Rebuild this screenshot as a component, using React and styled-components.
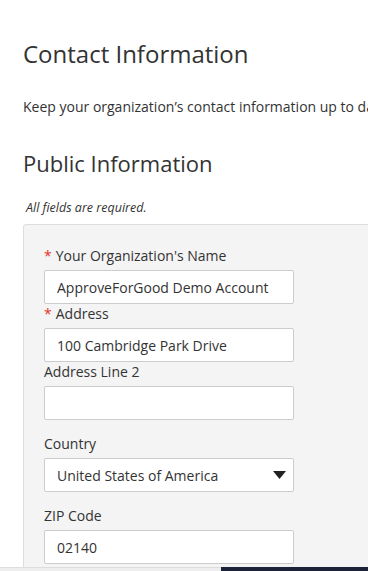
import React from "react";
import styled, { createGlobalStyle } from "styled-components";

const GlobalStyle = createGlobalStyle`
  html, body {
    margin: 0;
    padding: 0;
    background: #fff;
    overflow: hidden;
  }
  body {
    font-family: "Open Sans", "Liberation Sans", sans-serif;
    color: #333;
  }
`;

const fields = [
  { label: "Your Organization's Name", value: "ApproveForGood Demo Account", required: true },
  { label: "Address", value: "100 Cambridge Park Drive", required: true },
  { label: "Address Line 2", value: "", spaced: true },
];

export default function App() {
  return (
    <>
      <GlobalStyle />
      <Page>
        <Title>Contact Information</Title>
        <Intro>
          Keep your organization’s contact information up to date so that
          applicants can reach you.
        </Intro>
        <Subtitle>Public Information</Subtitle>
        <Note>All fields are required.</Note>
        <Panel>
          {fields.map((f) => (
            <Field key={f.label} $spaced={f.spaced}>
              <Label>
                {f.required && <Star>*</Star>}
                {f.label}
              </Label>
              <Input type="text" defaultValue={f.value} />
            </Field>
          ))}
          <Field $spaced>
            <Label>Country</Label>
            <SelectBox>
              <span>United States of America</span>
              <svg width="13" height="8" viewBox="0 0 13 8">
                <path d="M0 0 H13 L6.5 8 Z" fill="#222" />
              </svg>
            </SelectBox>
          </Field>
          <Field $spaced>
            <Label>ZIP Code</Label>
            <Input type="text" defaultValue="02140" />
          </Field>
        </Panel>
      </Page>
      <BottomBar>
        <BarLight />
        <BarDark />
      </BottomBar>
    </>
  );
}

const Page = styled.div`
  width: 640px;
  padding: 37px 0 0 23px;
`;

const Title = styled.h1`
  margin: 0;
  font-size: 24px;
  font-weight: 400;
  line-height: 34px;
  color: #333;
`;

const Intro = styled.p`
  margin: 26px 0 0;
  font-size: 14px;
  line-height: 20px;
  white-space: nowrap;
  color: #333;
`;

const Subtitle = styled.h2`
  margin: 29px 0 0;
  font-size: 22px;
  font-weight: 400;
  line-height: 34px;
  color: #333;
`;

const Note = styled.p`
  margin: 20px 0 0 3px;
  font-size: 12.5px;
  font-style: italic;
  line-height: 16px;
  color: #333;
`;

const Panel = styled.div`
  margin-top: 8px;
  background: #f4f4f4;
  border: 1px solid #ddd;
  border-radius: 3px;
  padding: 21px 20px 20px;
  min-height: 400px;
`;

const Field = styled.div`
  display: flex;
  flex-direction: column;
  width: 250px;
  margin-bottom: ${(p) => (p.$spaced ? "14px" : "0")};
`;

const Label = styled.label`
  font-size: 14px;
  line-height: 20px;
  color: #333;
  margin-bottom: 4px;
`;

const Star = styled.span`
  color: #e5322d;
  margin-right: 4px;
`;

const Input = styled.input`
  box-sizing: border-box;
  width: 250px;
  height: 34px;
  border: 1px solid #ccc;
  border-radius: 2px;
  background: #fff;
  padding: 0 12px;
  font-family: "Open Sans", "Liberation Sans", sans-serif;
  font-size: 14px;
  color: #333;
  outline: none;
`;

const SelectBox = styled.div`
  box-sizing: border-box;
  width: 250px;
  height: 34px;
  border: 1px solid #ccc;
  border-radius: 2px;
  background: #fff;
  padding: 0 7px 0 12px;
  display: flex;
  align-items: center;
  justify-content: space-between;
  font-size: 14px;
  color: #333;
`;

const BottomBar = styled.div`
  position: fixed;
  left: 0;
  right: 0;
  bottom: 0;
  height: 4px;
  display: flex;
`;

const BarLight = styled.div`
  width: 221px;
  background: #eeeeee;
  border-top: 1px solid #ddd;
`;

const BarDark = styled.div`
  flex: 1;
  background: #1c2338;
`;
